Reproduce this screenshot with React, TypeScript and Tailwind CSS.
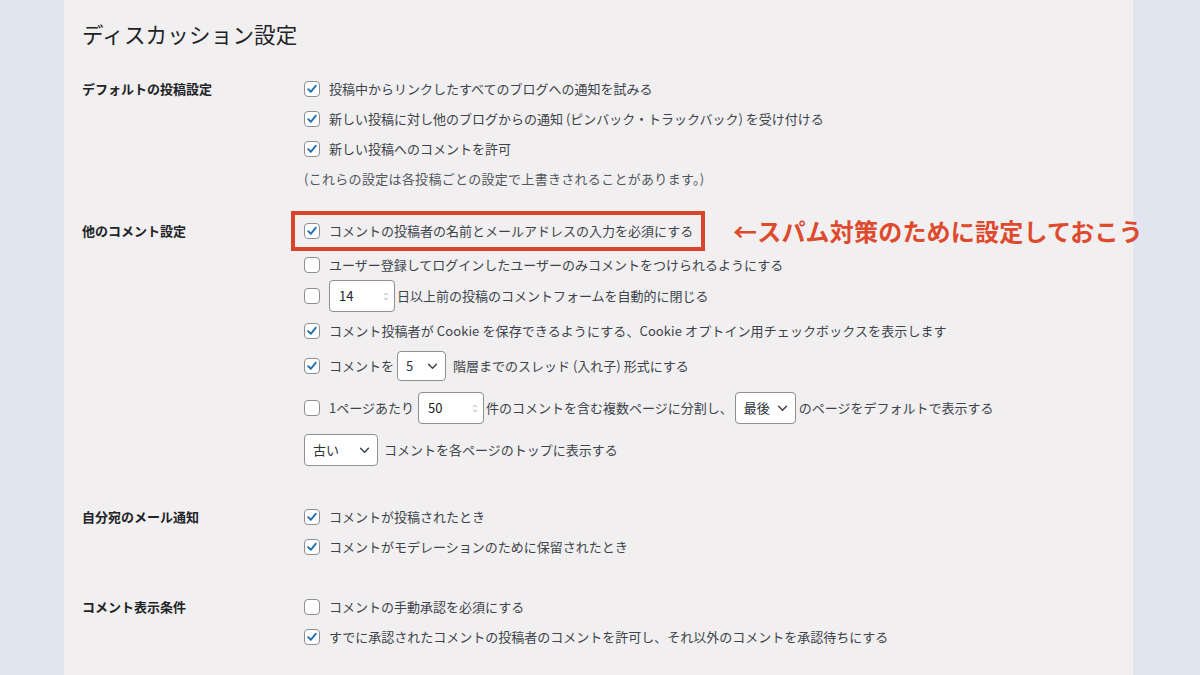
import React from 'react'

function Checkbox({ checked }: { checked?: boolean }) {
  return (
    <span className="w-[16px] h-[16px] shrink-0 rounded-[4px] border border-[#8c8f94] bg-white flex items-center justify-center">
      {checked && (
        <svg viewBox="0 0 16 16" className="w-[14px] h-[14px]">
          <path d="M3.6 8.2 L6.6 11.2 L12.4 4.2" fill="none" stroke="#2271b1" strokeWidth="2.2" strokeLinecap="round" strokeLinejoin="round" />
        </svg>
      )}
    </span>
  )
}

function NumberInput({ value, className }: { value: string; className: string }) {
  return (
    <span className={`h-[32px] rounded-[4px] border border-[#8c8f94] bg-white flex items-center justify-between pl-[9px] pr-[5px] text-[#1d2327] ${className}`}>
      <span>{value}</span>
      <svg viewBox="0 0 6 12" className="w-[6px] h-[11px]">
        <path d="M1 4.5 L3 2.5 L5 4.5 M1 7.5 L3 9.5 L5 7.5" fill="none" stroke="#9a9da2" strokeWidth="1" />
      </svg>
    </span>
  )
}

function Select({ value, className }: { value: string; className: string }) {
  return (
    <span className={`rounded-[4px] border border-[#8c8f94] bg-white flex items-center justify-between pl-[8px] pr-[7px] text-[#2c3338] ${className}`}>
      <span>{value}</span>
      <svg viewBox="0 0 12 8" className="w-[11px] h-[7px]">
        <path d="M1.5 1.5 L6 6 L10.5 1.5" fill="none" stroke="#3c434a" strokeWidth="1.7" strokeLinecap="round" strokeLinejoin="round" />
      </svg>
    </span>
  )
}

function Label({ text, className }: { text: string; className: string }) {
  return (
    <div className={`w-[222px] shrink-0 flex items-center font-bold text-[#1d2327] ${className}`}>{text}</div>
  )
}

export default function App() {
  return (
    <div className="w-[1200px] h-[675px] overflow-hidden flex bg-[#e0e5ef] font-['Noto_Sans_CJK_JP','Noto_Sans',sans-serif] text-[13px] text-[#3c434a] whitespace-nowrap">
      <div className="w-[64px] shrink-0" />
      <main className="w-[1069px] shrink-0 bg-[#f1eff0] pl-[18px]">
        <h1 className="h-[68px] flex items-center text-[21.5px] text-[#1d2327] tracking-[0.2px]">ディスカッション設定</h1>

        {/* デフォルトの投稿設定 */}
        <section className="flex mt-[6px]">
          <Label text="デフォルトの投稿設定" className="h-[30px]" />
          <div className="flex flex-col">
            <div className="h-[30px] flex items-center gap-[9px]"><Checkbox checked />投稿中からリンクしたすべてのブログへの通知を試みる</div>
            <div className="h-[30px] flex items-center gap-[9px]"><Checkbox checked />新しい投稿に対し他のブログからの通知 (ピンバック・トラックバック) を受け付ける</div>
            <div className="h-[30px] flex items-center gap-[9px]"><Checkbox checked />新しい投稿へのコメントを許可</div>
            <div className="h-[30px] flex items-center text-[#50575e] tracking-[0.3px]">(これらの設定は各投稿ごとの設定で上書きされることがあります。)</div>
          </div>
        </section>

        {/* 他のコメント設定 */}
        <section className="flex mt-[17px]">
          <Label text="他のコメント設定" className="h-[40px]" />
          <div className="flex flex-col">
            <div className="h-[40px] flex items-center">
              <div className="-ml-[13px] w-[414px] shrink-0 h-[40px] border-[4px] border-[#d9452b] pl-[9px] flex items-center gap-[9px]">
                <Checkbox checked />コメントの投稿者の名前とメールアドレスの入力を必須にする
              </div>
              <span className="ml-[28px] shrink-0 text-[24px] font-bold text-[#de4a2d] tracking-[0.2px]">←スパム対策のために設定しておこう</span>
            </div>
            <div className="h-[28px] flex items-center gap-[9px]"><Checkbox />ユーザー登録してログインしたユーザーのみコメントをつけられるようにする</div>
            <div className="h-[34px] flex items-center">
              <Checkbox />
              <NumberInput value="14" className="ml-[9px] w-[66px]" />
              <span className="ml-[2px]">日以上前の投稿のコメントフォームを自動的に閉じる</span>
            </div>
            <div className="h-[36px] flex items-center gap-[9px]"><Checkbox checked /><span className="tracking-[0.1px]">コメント投稿者が Cookie を保存できるようにする、Cookie オプトイン用チェックボックスを表示します</span></div>
            <div className="h-[34px] flex items-center">
              <Checkbox checked />
              <span className="ml-[9px]">コメントを</span>
              <Select value="5" className="ml-[3px] w-[49px] h-[30px]" />
              <span className="ml-[7px]">階層までのスレッド (入れ子) 形式にする</span>
            </div>
            <div className="h-[50px] flex items-center">
              <Checkbox />
              <span className="ml-[9px]">1ページあたり</span>
              <NumberInput value="50" className="ml-[4px] w-[66px]" />
              <span className="ml-[2px]">件のコメントを含む複数ページに分割し、</span>
              <Select value="最後" className="ml-[2px] w-[61px] h-[32px]" />
              <span className="ml-[3px]">のページをデフォルトで表示する</span>
            </div>
            <div className="h-[34px] flex items-center">
              <Select value="古い" className="w-[74px] h-[32px]" />
              <span className="ml-[6px]">コメントを各ページのトップに表示する</span>
            </div>
          </div>
        </section>

        {/* 自分宛のメール通知 */}
        <section className="flex mt-[35px]">
          <Label text="自分宛のメール通知" className="h-[30px]" />
          <div className="flex flex-col">
            <div className="h-[30px] flex items-center gap-[9px]"><Checkbox checked />コメントが投稿されたとき</div>
            <div className="h-[30px] flex items-center gap-[9px]"><Checkbox checked />コメントがモデレーションのために保留されたとき</div>
          </div>
        </section>

        {/* コメント表示条件 */}
        <section className="flex mt-[30px]">
          <Label text="コメント表示条件" className="h-[30px]" />
          <div className="flex flex-col">
            <div className="h-[30px] flex items-center gap-[9px]"><Checkbox />コメントの手動承認を必須にする</div>
            <div className="h-[30px] flex items-center gap-[9px]"><Checkbox checked />すでに承認されたコメントの投稿者のコメントを許可し、それ以外のコメントを承認待ちにする</div>
          </div>
        </section>
      </main>
      <div className="flex-1" />
    </div>
  )
}
